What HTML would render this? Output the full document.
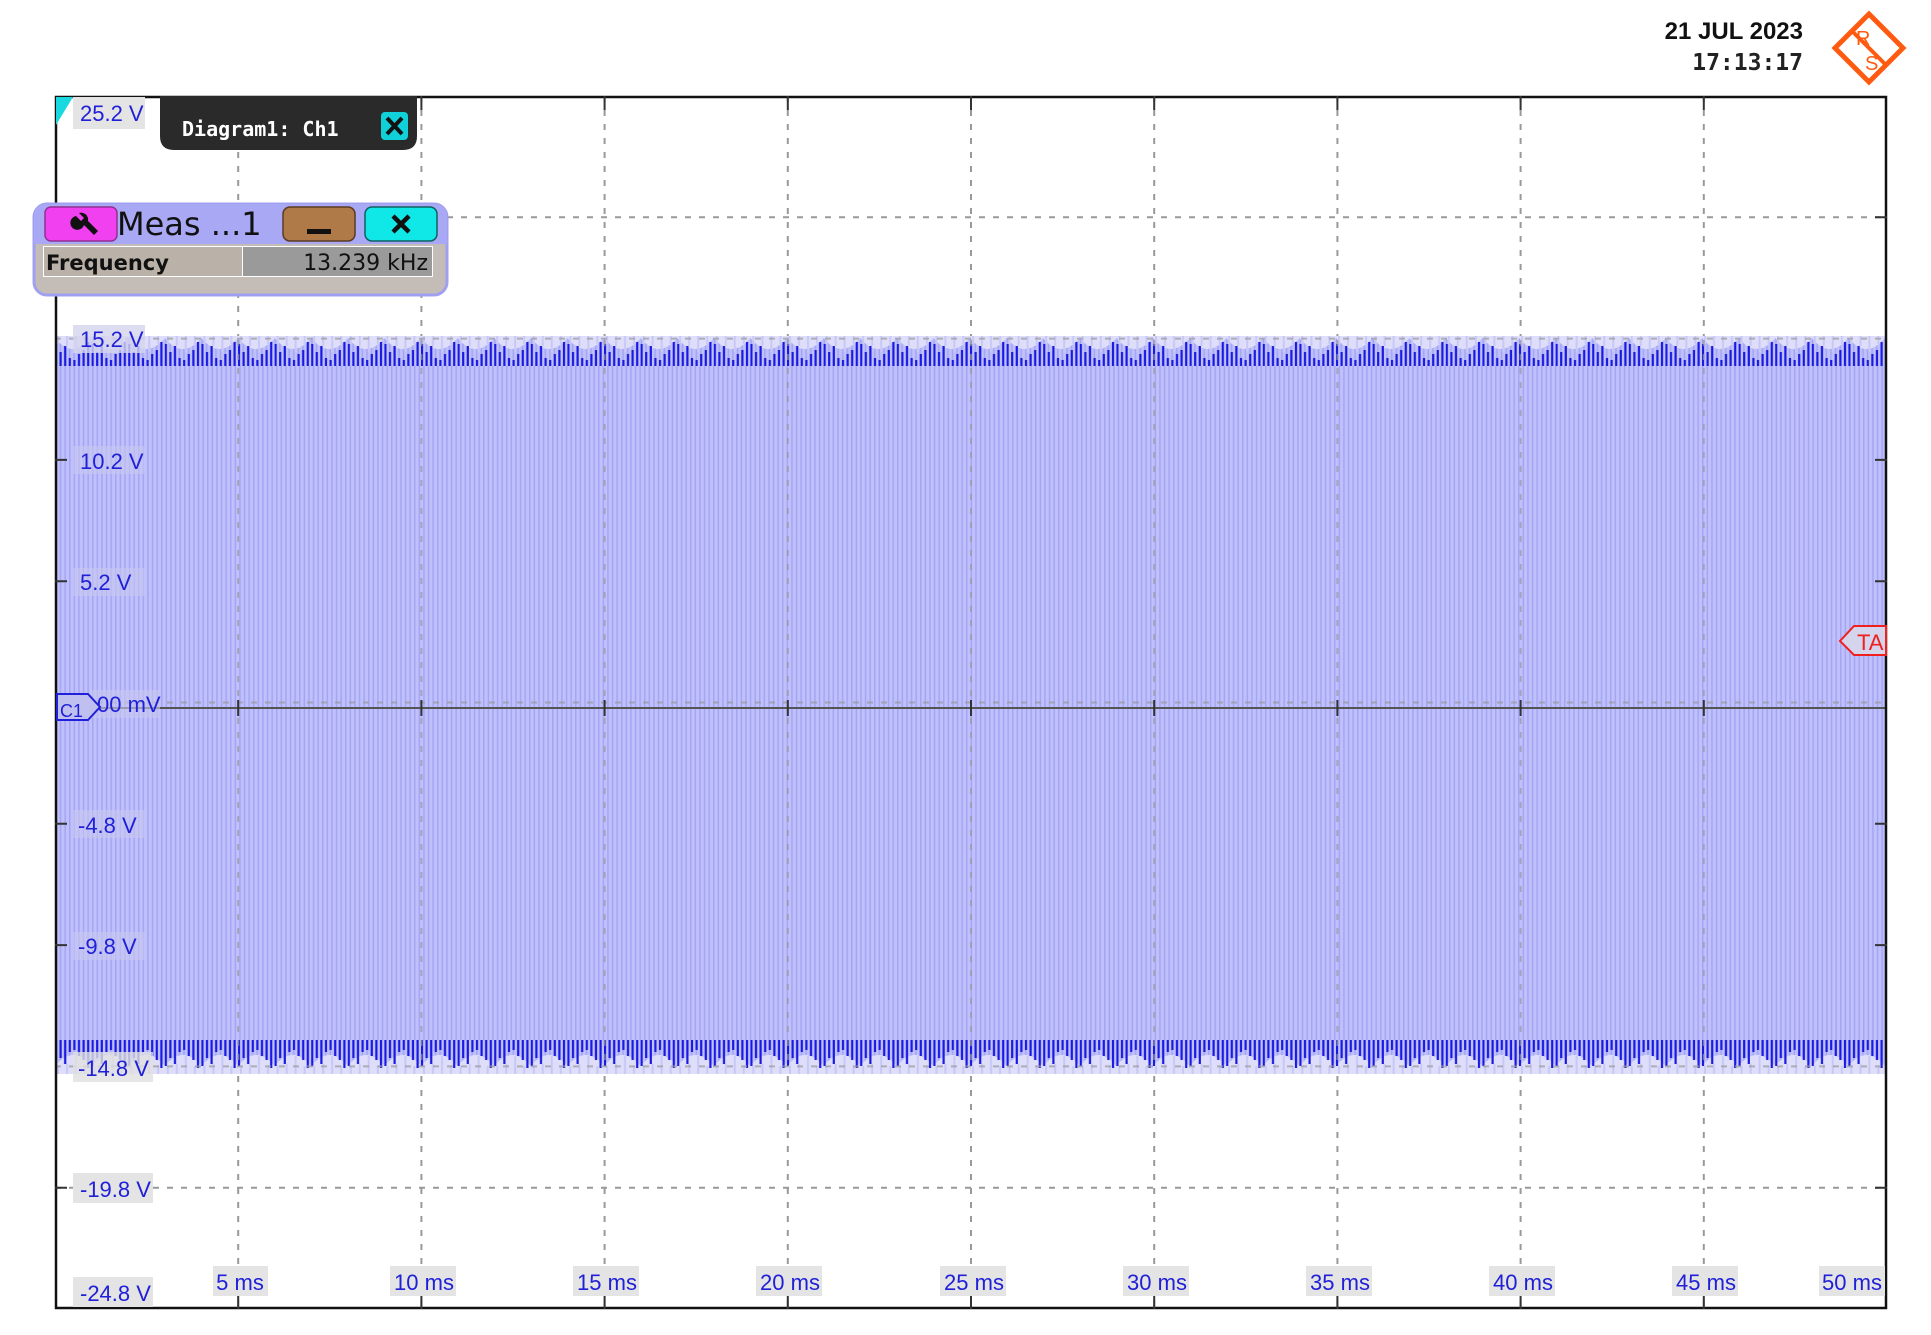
<!DOCTYPE html>
<html><head><meta charset="utf-8"><style>
html,body{margin:0;padding:0;background:#fff;}
svg{display:block;font-family:"Liberation Sans",sans-serif;}
</style></head><body>
<svg width="1931" height="1335" viewBox="0 0 1931 1335" xmlns="http://www.w3.org/2000/svg">
<defs>
<pattern id="st" width="4.6" height="10" patternUnits="userSpaceOnUse">
<rect width="4.6" height="10" fill="#bfc0fc"/>
<rect x="0" width="1.5" height="10" fill="#a4a6f2"/>
</pattern>
<pattern id="topedge" x="55" y="330" width="36.6" height="40" patternUnits="userSpaceOnUse">
<rect width="36.6" height="40" fill="#dedefa"/>
<path d="M0 8 Q18 30 36.6 8 L36.6 40 L0 40Z" fill="url(#st)"/>
<g stroke="#1a1ae0" stroke-width="2.2">
<path d="M1 14v26M5.6 22v18M10.2 16v24M14.8 28v12M19.4 30v10M24 24v16M28.6 20v20M33.2 12v28"/>
</g>
<g stroke="#c8c8f6" stroke-width="2">
<path d="M3 4v10M12 6v10M21 2v20M30 6v8"/>
</g>
</pattern>
<pattern id="botedge" x="55" y="1040" width="36.6" height="40" patternUnits="userSpaceOnUse">
<rect width="36.6" height="40" fill="#dedefa"/>
<path d="M0 0 L36.6 0 L36.6 26 Q18 4 0 26Z" fill="url(#st)"/>
<g stroke="#1a1ae0" stroke-width="2.2">
<path d="M1 0v26M5.6 0v18M10.2 0v24M14.8 0v12M19.4 0v10M24 0v16M28.6 0v20M33.2 0v28"/>
</g>
<g stroke="#c8c8f6" stroke-width="2">
<path d="M3 26v10M12 24v12M21 16v20M30 26v8"/>
</g>
</pattern>
</defs>

<g stroke="#999" stroke-width="2" stroke-dasharray="6,8">
<line x1="238.2" y1="96" x2="238.2" y2="1309"/><line x1="421.4" y1="96" x2="421.4" y2="1309"/>
<line x1="604.6" y1="96" x2="604.6" y2="1309"/><line x1="787.8" y1="96" x2="787.8" y2="1309"/>
<line x1="971" y1="96" x2="971" y2="1309"/><line x1="1154.2" y1="96" x2="1154.2" y2="1309"/>
<line x1="1337.4" y1="96" x2="1337.4" y2="1309"/><line x1="1520.6" y1="96" x2="1520.6" y2="1309"/>
<line x1="1703.8" y1="96" x2="1703.8" y2="1309"/>
<line x1="55" y1="217.3" x2="1887" y2="217.3"/><line x1="55" y1="338.6" x2="1887" y2="338.6"/>
<line x1="55" y1="459.9" x2="1887" y2="459.9"/><line x1="55" y1="581.2" x2="1887" y2="581.2"/>
<line x1="55" y1="702.5" x2="1887" y2="702.5"/><line x1="55" y1="823.8" x2="1887" y2="823.8"/>
<line x1="55" y1="945.1" x2="1887" y2="945.1"/><line x1="55" y1="1066.4" x2="1887" y2="1066.4"/>
<line x1="55" y1="1187.7" x2="1887" y2="1187.7"/>
</g>

<rect x="57" y="365" width="1828" height="676" fill="url(#st)"/>
<rect x="57" y="336" width="1828" height="30" fill="url(#topedge)"/>
<rect x="57" y="1040" width="1828" height="34" fill="url(#botedge)"/>
<g stroke="#999" stroke-width="2" stroke-dasharray="6,8" opacity="0.7">
<line x1="55" y1="338.6" x2="1887" y2="338.6"/><line x1="55" y1="1066.4" x2="1887" y2="1066.4"/>
<line x1="55" y1="702.5" x2="1887" y2="702.5"/>
<line x1="238.2" y1="340" x2="238.2" y2="1066"/><line x1="421.4" y1="340" x2="421.4" y2="1066"/>
<line x1="604.6" y1="340" x2="604.6" y2="1066"/><line x1="787.8" y1="340" x2="787.8" y2="1066"/>
<line x1="971" y1="340" x2="971" y2="1066"/><line x1="1154.2" y1="340" x2="1154.2" y2="1066"/>
<line x1="1337.4" y1="340" x2="1337.4" y2="1066"/><line x1="1520.6" y1="340" x2="1520.6" y2="1066"/>
<line x1="1703.8" y1="340" x2="1703.8" y2="1066"/>
</g>

<line x1="55" y1="708" x2="1887" y2="708" stroke="#555" stroke-width="2"/>

<rect x="56" y="97" width="1830" height="1211" fill="none" stroke="#111" stroke-width="2.5"/>
<g stroke="#333" stroke-width="2">
<path d="M238.2 1309v-14M421.4 1309v-14M604.6 1309v-14M787.8 1309v-14M971 1309v-14M1154.2 1309v-14M1337.4 1309v-14M1520.6 1309v-14M1703.8 1309v-14"/>
<path d="M238.2 96v14M421.4 96v14M604.6 96v14M787.8 96v14M971 96v14M1154.2 96v14M1337.4 96v14M1520.6 96v14M1703.8 96v14"/>
<path d="M55 217.3h12M55 459.9h12M55 581.2h12M55 823.8h12M55 945.1h12M55 1187.7h12"/>
<path d="M1887 217.3h-12M1887 459.9h-12M1887 581.2h-12M1887 823.8h-12M1887 945.1h-12M1887 1187.7h-12"/>
<path d="M238.2 700v16M421.4 700v16M604.6 700v16M787.8 700v16M971 700v16M1154.2 700v16M1337.4 700v16M1520.6 700v16M1703.8 700v16"/>
</g>
<path d="M56 97 L73 97 L56 125Z" fill="#1ad8e0"/>

<g font-size="22" fill="#2020d8">
<rect x="73" y="97" width="72" height="32" fill="#e4e4e4"/><text x="80" y="121">25.2 V</text>
<rect x="73" y="325" width="72" height="28" fill="#d4d4ee" opacity="0.8"/><text x="80" y="347">15.2 V</text>
<rect x="73" y="446" width="72" height="28" fill="#c8c8f0" opacity="0.6"/><text x="80" y="469">10.2 V</text>
<rect x="73" y="568" width="72" height="28" fill="#c8c8f0" opacity="0.6"/><text x="80" y="590">5.2 V</text>
<rect x="90" y="690" width="70" height="28" fill="#c8c8f0" opacity="0.6"/><text x="97" y="712">00 mV</text>
<rect x="73" y="810" width="72" height="28" fill="#c8c8f0" opacity="0.6"/><text x="78" y="833">-4.8 V</text>
<rect x="73" y="932" width="72" height="28" fill="#c8c8f0" opacity="0.6"/><text x="78" y="954">-9.8 V</text>
<rect x="73" y="1052" width="80" height="30" fill="#e0e0e0" opacity="0.8"/><text x="78" y="1076">-14.8 V</text>
<rect x="73" y="1173" width="80" height="30" fill="#e4e4e4"/><text x="80" y="1197">-19.8 V</text>
<rect x="73" y="1277" width="80" height="30" fill="#e4e4e4"/><text x="80" y="1301">-24.8 V</text>
</g>

<g font-size="22" fill="#2020d8" text-anchor="middle">
<rect x="213" y="1266" width="55" height="30" fill="#e4e4e4"/><text x="240" y="1290">5 ms</text>
<rect x="390" y="1266" width="66" height="30" fill="#e4e4e4"/><text x="424" y="1290">10 ms</text>
<rect x="573" y="1266" width="66" height="30" fill="#e4e4e4"/><text x="607" y="1290">15 ms</text>
<rect x="756" y="1266" width="66" height="30" fill="#e4e4e4"/><text x="790" y="1290">20 ms</text>
<rect x="940" y="1266" width="66" height="30" fill="#e4e4e4"/><text x="974" y="1290">25 ms</text>
<rect x="1123" y="1266" width="66" height="30" fill="#e4e4e4"/><text x="1157" y="1290">30 ms</text>
<rect x="1306" y="1266" width="66" height="30" fill="#e4e4e4"/><text x="1340" y="1290">35 ms</text>
<rect x="1489" y="1266" width="66" height="30" fill="#e4e4e4"/><text x="1523" y="1290">40 ms</text>
<rect x="1672" y="1266" width="66" height="30" fill="#e4e4e4"/><text x="1706" y="1290">45 ms</text>
<rect x="1819" y="1266" width="66" height="30" fill="#e4e4e4"/><text x="1852" y="1290">50 ms</text>
</g>

<path d="M57 694 L88 694 L100 707 L88 720 L57 720Z" fill="#c0c0f0" stroke="#2020d8" stroke-width="2"/>
<text x="60" y="717" font-size="18" fill="#2020d8">C1</text>
<path d="M1886 626 L1854 626 L1840 641 L1854 655 L1886 655Z" fill="#d4d4ec" stroke="#f02020" stroke-width="2"/>
<text x="1857" y="650" font-size="22" fill="#f02020">TA</text>

<path d="M160 96 L417 96 L417 136 Q417 150 403 150 L174 150 Q160 150 160 136Z" fill="#2a2a2a"/>
<text x="182" y="136" style="font-family:'DejaVu Sans Mono',monospace;font-weight:bold;font-size:20px" fill="#fff">Diagram1: Ch1</text>
<rect x="381" y="112" width="27" height="28" rx="4" fill="#10d0d8"/>
<path d="M387 118 L402 134 M402 118 L387 134" stroke="#111" stroke-width="4"/>

<rect x="34" y="204" width="413" height="91" rx="13" fill="#c4bcb6" stroke="#a0a0f0" stroke-width="3"/>
<path d="M34 217 Q34 204 47 204 L434 204 Q447 204 447 217 L447 244 L34 244Z" fill="#a8a8f4"/>
<rect x="45" y="207" width="72" height="34" rx="6" fill="#f040f0" stroke="#903090" stroke-width="1.5"/>
<path d="M76 216 a7 7 0 1 0 8 9 l10 10 l4 -4 l-10 -10 a7 7 0 0 0 -9 -8 l5 5 l-3 3z" fill="#111"/>
<text x="117" y="235" style="font-family:'DejaVu Sans',sans-serif;font-size:32px" fill="#111">Meas ...1</text>
<rect x="283" y="207" width="72" height="34" rx="7" fill="#b07a48" stroke="#5a3a20" stroke-width="1.5"/>
<rect x="307" y="229" width="24" height="5" fill="#111"/>
<rect x="365" y="207" width="72" height="34" rx="7" fill="#10e8e8" stroke="#106060" stroke-width="1.5"/>
<path d="M393 216 L409 232 M409 216 L393 232" stroke="#111" stroke-width="4.5"/>
<rect x="43" y="246" width="390" height="31" fill="#fff"/>
<rect x="44" y="247" width="198" height="29" fill="#bab2a8"/>
<rect x="243" y="247" width="189" height="29" fill="#9a9a9a"/>
<text x="46" y="270" style="font-family:'DejaVu Sans',sans-serif;font-weight:bold;font-size:21px" fill="#111">Frequency</text>
<text x="428" y="270" text-anchor="end" style="font-family:'DejaVu Sans',sans-serif;font-size:22px" fill="#111">13.239 kHz</text>

<text x="1803" y="39" text-anchor="end" font-size="24" font-weight="bold" fill="#111">21 JUL 2023</text>
<text x="1803" y="70" text-anchor="end" style="font-family:'DejaVu Sans Mono',monospace;font-size:23px;font-weight:bold" fill="#222">17:13:17</text>

<g transform="translate(1869 48)">
<path d="M0 -34 L34 0 L0 34 L-34 0Z" fill="none" stroke="#ff5a10" stroke-width="5"/>
<path d="M-17 -17 L17 17" stroke="#ff5a10" stroke-width="4"/>
<text x="-13" y="-3" font-size="20" fill="#ff5a10">R</text>
<text x="-4" y="22" font-size="20" fill="#ff5a10">S</text>
</g>
</svg>
</body></html>
